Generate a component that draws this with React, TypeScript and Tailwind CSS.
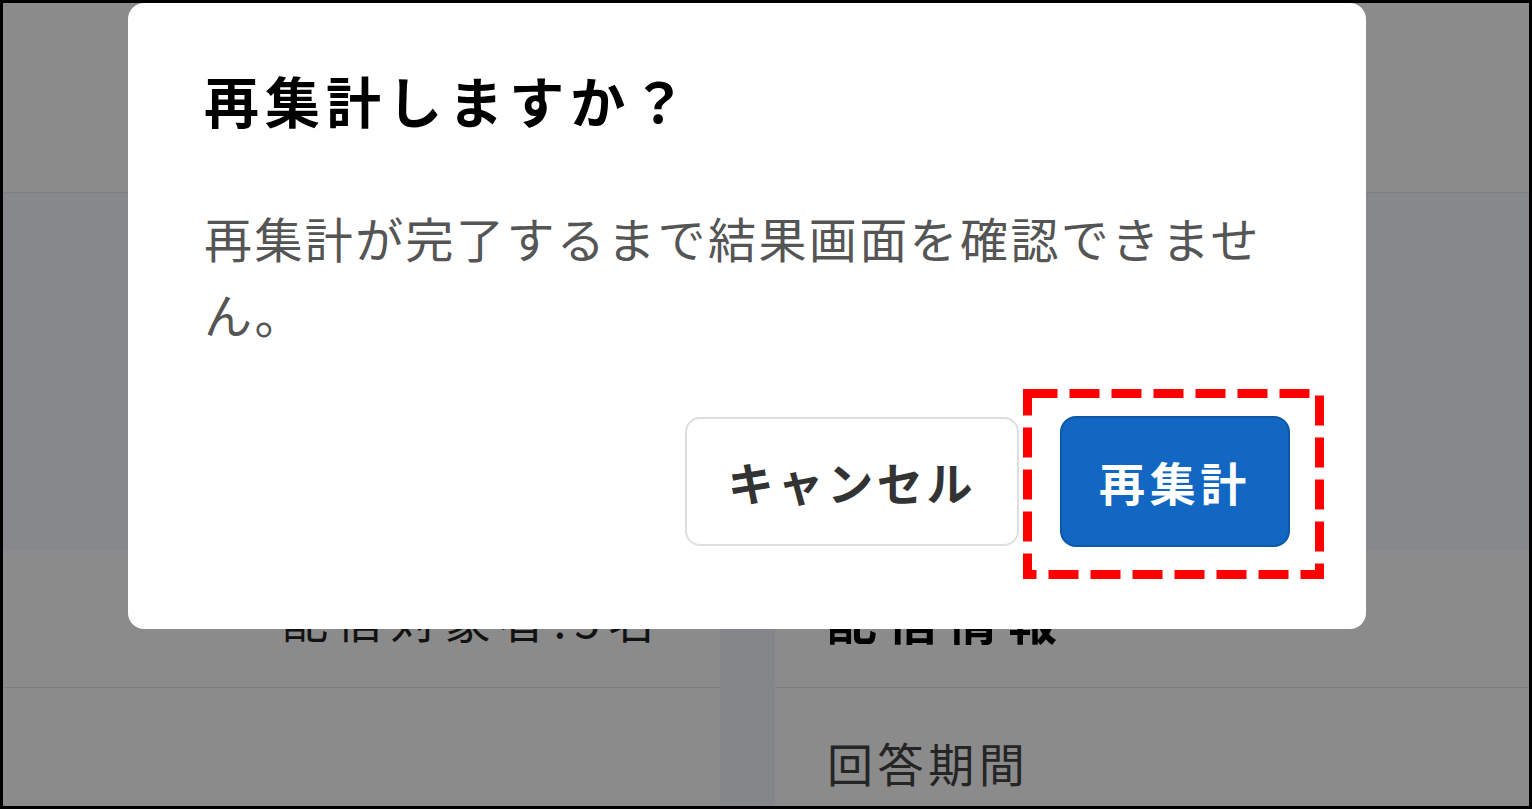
import React from "react";

const font = { fontFamily: '"Noto Sans CJK JP", "Noto Sans", sans-serif' };

function DashedMark() {
  // red dashed annotation drawn around the confirm button
  return (
    <svg
      className="pointer-events-none absolute left-[-37px] top-[-27px]"
      width="301"
      height="190"
      viewBox="0 0 301 190"
    >
      <rect
        x="4.5"
        y="4.5"
        width="292"
        height="181"
        fill="none"
        stroke="#ff0000"
        strokeWidth="9"
        strokeDasharray="30 12"
      />
    </svg>
  );
}

function BackgroundPage() {
  return (
    <div className="flex h-full flex-col bg-white">
      <div className="h-[190px] shrink-0 border-b border-[#e8e8e8]" />
      <div className="h-[357px] shrink-0 bg-[#f8faff]" />
      <div className="flex flex-1">
        <div className="w-[717px] shrink-0">
          <div className="flex h-[138px] items-center border-b border-[#e8e8e8] pl-[279px] text-[46px] tracking-[0.18em] text-[#222]">
            配信対象者:5名
          </div>
        </div>
        <div className="w-[55px] shrink-0 bg-[#f4f6fc]" />
        <div className="flex-1">
          <div className="flex h-[138px] items-center border-b border-[#e8e8e8] pl-[52px] text-[50px] font-bold tracking-[0.2em] text-black">
            配信情報
          </div>
          <div className="flex h-[148px] items-center pl-[52px] text-[46px] tracking-[0.1em] text-[#444]">
            回答期間
          </div>
        </div>
      </div>
    </div>
  );
}

export default function App() {
  return (
    <div
      className="relative h-[809px] w-[1532px] overflow-hidden border-[3px] border-black"
      style={font}
    >
      <BackgroundPage />
      <div className="absolute inset-0 bg-[rgba(0,0,0,0.455)]" />

      <div className="absolute left-[125px] top-0 w-[1238px] rounded-[16px] bg-white px-[76px] pb-[82px] pt-[54px]">
        <h2 className="text-[55px] font-bold leading-[84px] tracking-[0.11em] text-black">
          再集計しますか？
        </h2>
        <p className="mt-[58px] text-[48px] leading-[76px] tracking-[0.05em] text-[#555]">
          再集計が完了するまで結果画面を確認できません。
        </p>
        <div className="mt-[65px] flex items-center justify-end gap-[41px]">
          <button className="flex h-[129px] w-[334px] items-center justify-center rounded-[15px] border-2 border-[#dedede] bg-white text-[46px] font-bold tracking-[0.08em] text-[#333]">
            キャンセル
          </button>
          <div className="relative">
            <button className="flex h-[131px] w-[230px] items-center justify-center rounded-[16px] border-2 border-[#0c58a8] bg-[#1167c1] text-[46px] font-bold tracking-[0.1em] text-white">
              再集計
            </button>
            <DashedMark />
          </div>
        </div>
      </div>
    </div>
  );
}
